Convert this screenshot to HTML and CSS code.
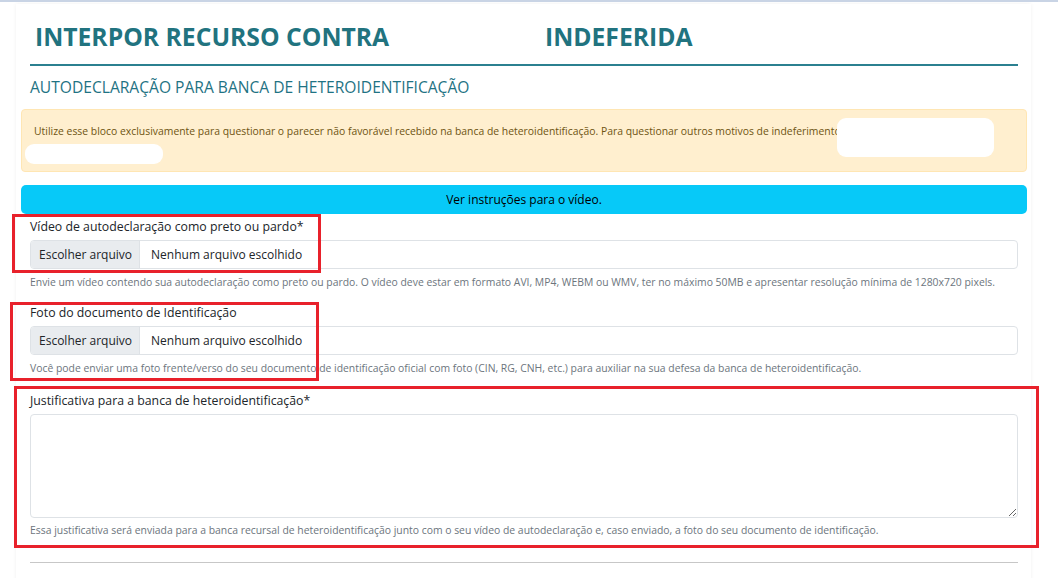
FILE: index.html
```html
<!DOCTYPE html>
<html lang="pt-BR">
<head>
  <meta charset="UTF-8">
  <meta name="viewport" content="width=device-width, initial-scale=1.0">
  <title>Interpor recurso</title>
  <link rel="stylesheet" href="styles.css">
</head>
<body>
  <div class="page">
    <div class="card">
      <div class="title-row">
        <h1>INTERPOR RECURSO CONTRA</h1>
        <h1>INDEFERIDA</h1>
      </div>
      <h2>AUTODECLARAÇÃO PARA BANCA DE HETEROIDENTIFICAÇÃO</h2>

      <div class="alert">
        Utilize esse bloco exclusivamente para questionar o parecer não favorável recebido na banca de heteroidentificação. Para questionar outros motivos de indeferimento<br>&nbsp;
        <span class="blank blank-a"></span>
        <span class="blank blank-b"></span>
      </div>

      <button class="btn-info" type="button">Ver instruções para o vídeo.</button>

      <form class="form">
        <div class="form-group">
          <label>Vídeo de autodeclaração como preto ou pardo*</label>
          <div class="file-input">
            <span class="file-btn">Escolher arquivo</span>
            <span class="file-name">Nenhum arquivo escolhido</span>
          </div>
          <small>Envie um vídeo contendo sua autodeclaração como preto ou pardo. O vídeo deve estar em formato AVI, MP4, WEBM ou WMV, ter no máximo 50MB e apresentar resolução mínima de 1280x720 pixels.</small>
        </div>
        <div class="form-group">
          <label>Foto do documento de Identificação</label>
          <div class="file-input">
            <span class="file-btn">Escolher arquivo</span>
            <span class="file-name">Nenhum arquivo escolhido</span>
          </div>
          <small>Você pode enviar uma foto frente/verso do seu documento de identificação oficial com foto (CIN, RG, CNH, etc.) para auxiliar na sua defesa da banca de heteroidentificação.</small>
        </div>
        <div class="form-group group-text">
          <label for="justificativa">Justificativa para a banca de heteroidentificação*</label>
          <textarea id="justificativa"></textarea>
          <small>Essa justificativa será enviada para a banca recursal de heteroidentificação junto com o seu vídeo de autodeclaração e, caso enviado, a foto do seu documento de identificação.</small>
        </div>
      </form>
      <hr>
    </div>

    <div class="mark mark-video"></div>
    <div class="mark mark-foto"></div>
    <div class="mark mark-just"></div>
  </div>
</body>
</html>
```

FILE: styles.css
```css
body {
  font-family: 'Open Sans', 'Noto Sans', sans-serif;
  margin: 0;
  padding: 0;
  background: #fff;
  color: #212529;
  border-top: 2px solid #c9d4e5;
  height: 576px;
  overflow: hidden;
}
.page {
  position: relative;
  padding: 2px 27px 0 16px;
}
.card {
  background: #fff;
  box-shadow: 0 0 4px rgba(0, 0, 0, 0.06);
  padding: 0 4px 20px 5px;
}
.title-row {
  display: grid;
  grid-template-columns: 510px auto;
  padding: 16px 0 0 5px;
  margin: 0 9px;
  border-bottom: 2px solid #2b8090;
  height: 44px;
}
h1 {
  margin: 0;
  font-size: 24.7px;
  font-weight: 700;
  color: #21737f;
  line-height: 34px;
}
h2 {
  margin: 10px 9px 0;
  font-size: 15.6px;
  font-weight: 500;
  color: #1f7384;
  line-height: 22px;
}
.alert {
  position: relative;
  margin-top: 11px;
  background: #ffefcf;
  border: 1px solid #ffe6b3;
  border-radius: 4px;
  padding: 12px 12px 13px;
  font-size: 10.4px;
  line-height: 18px;
  color: #6e5412;
}
.blank {
  position: absolute;
  background: #fff;
  border-radius: 9px;
}
.blank-a {
  left: 815px;
  top: 8px;
  width: 157px;
  height: 39px;
}
.blank-b {
  left: 3px;
  top: 34px;
  width: 138px;
  height: 20px;
}
.btn-info {
  display: block;
  width: 100%;
  margin-top: 13px;
  height: 29px;
  border: none;
  border-radius: 5px;
  background: #07c9f8;
  color: #000;
  font-family: inherit;
  font-size: 12px;
}
.form {
  padding: 0 9px;
}
.form-group {
  margin-top: 4px;
}
.form-group + .form-group {
  margin-top: 14px;
}
.form-group.group-text {
  margin-top: 16px;
}
label {
  display: block;
  font-size: 12.3px;
  line-height: 18px;
  margin-bottom: 4px;
}
.file-input {
  display: flex;
  height: 29px;
  border: 1px solid #dee2e6;
  border-radius: 4px;
  overflow: hidden;
  box-sizing: border-box;
  font-size: 12px;
  line-height: 27px;
  white-space: nowrap;
}
.file-btn {
  background: #e9ecef;
  border-right: 1px solid #dee2e6;
  padding: 0 7px 0 8px;
}
.file-name {
  padding: 0 11px;
}
small {
  display: block;
  margin-top: 5px;
  font-size: 10.4px;
  line-height: 16px;
  color: #6c757d;
}
textarea {
  display: block;
  width: 100%;
  height: 104px;
  box-sizing: border-box;
  border: 1px solid #dee2e6;
  border-radius: 4px;
  resize: vertical;
  margin-bottom: -1px;
}
hr {
  margin: 24px 9px 0;
  border: none;
  border-top: 1px solid #c7c7c7;
}
.mark {
  position: absolute;
  border: 3px solid #e8212b;
  box-sizing: border-box;
}
.mark-video {
  left: 12px;
  top: 212px;
  width: 309px;
  height: 59px;
}
.mark-foto {
  left: 10px;
  top: 300px;
  width: 309px;
  height: 79px;
}
.mark-just {
  left: 14px;
  top: 384px;
  width: 1025px;
  height: 162px;
}
```
